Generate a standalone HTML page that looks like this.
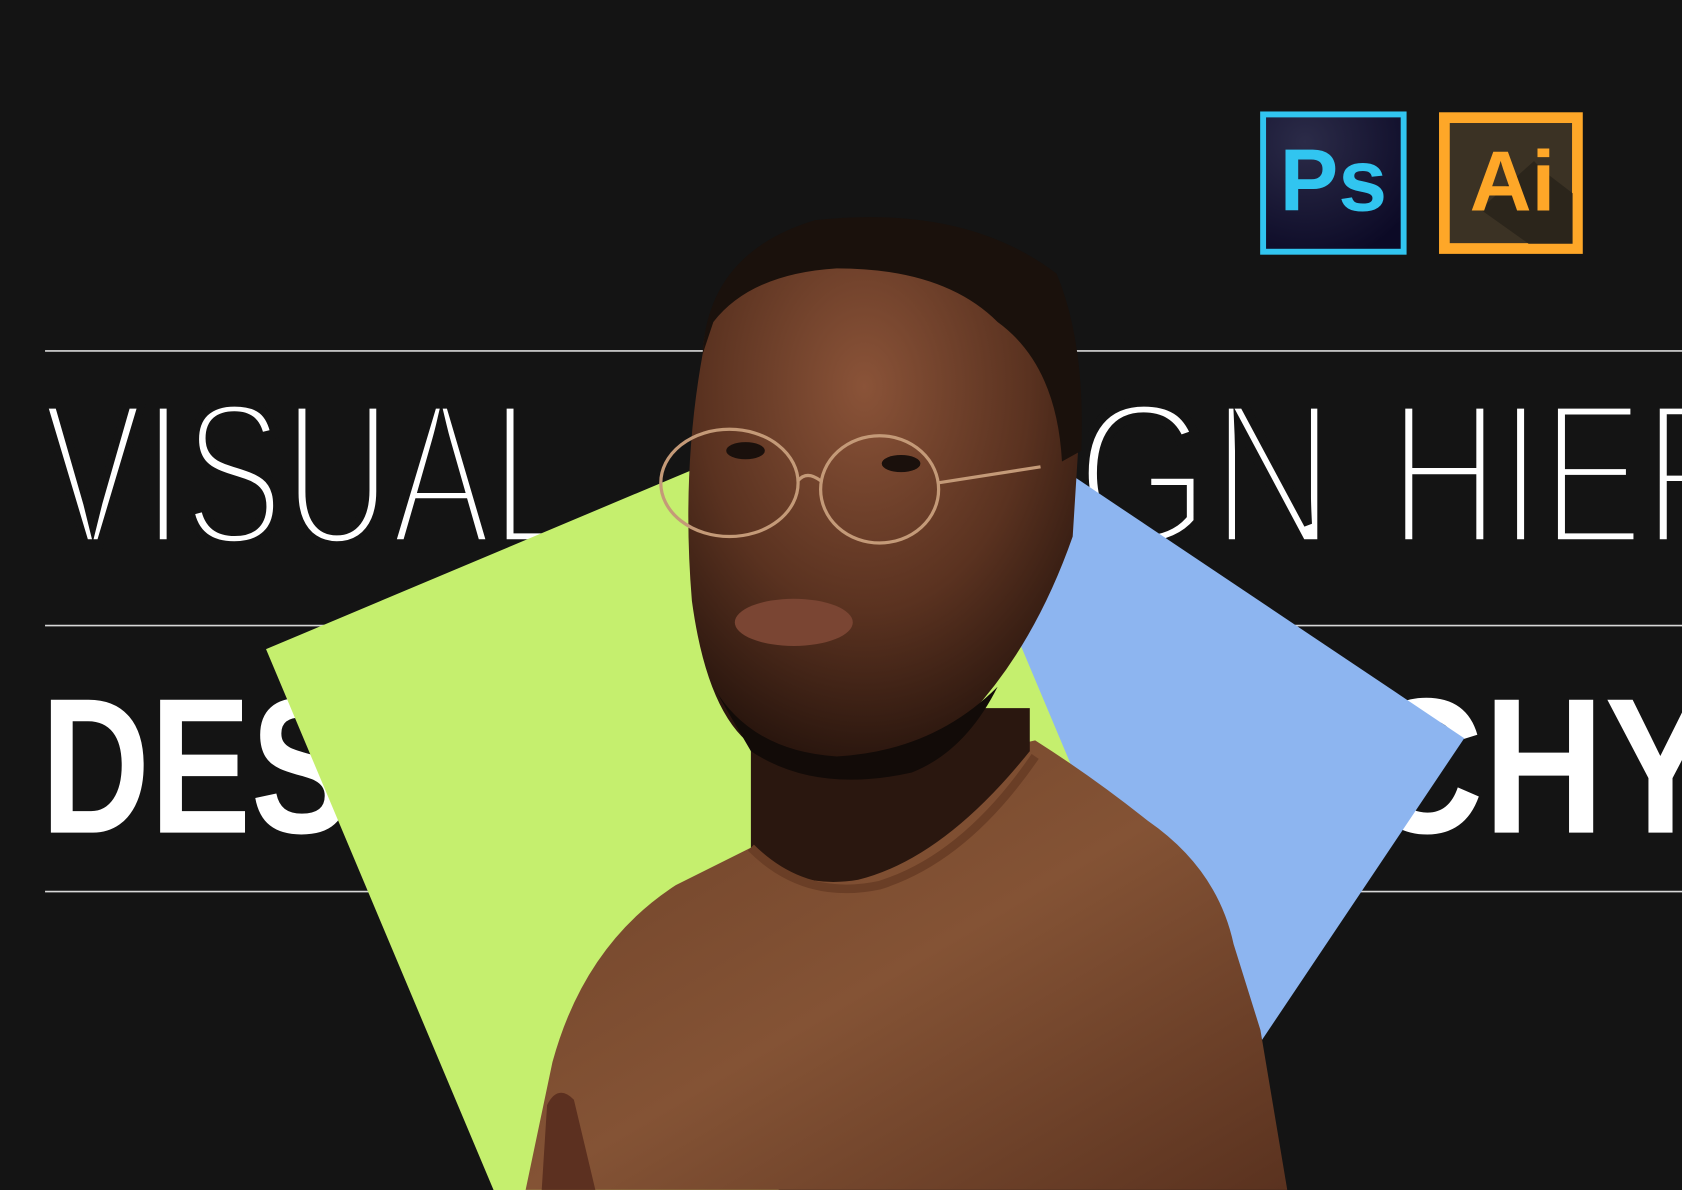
<!DOCTYPE html>
<html><head><meta charset="utf-8"><style>
html,body{margin:0;padding:0;background:#141414;overflow:hidden;width:1682px;height:1190px}
svg{display:block}
</style></head><body>
<svg width="1682" height="1190" viewBox="0 0 1568 1109" xmlns="http://www.w3.org/2000/svg">
<defs>
<radialGradient id="psg" cx="0.3" cy="0.2" r="0.9"><stop offset="0" stop-color="#2b2b48"/><stop offset="1" stop-color="#0c0a26"/></radialGradient>
<radialGradient id="face" cx="0.45" cy="0.3" r="0.7"><stop offset="0" stop-color="#8a5338"/><stop offset="0.6" stop-color="#5a3220"/><stop offset="1" stop-color="#2a160e"/></radialGradient>
<linearGradient id="sw" x1="0" y1="0" x2="1" y2="1"><stop offset="0" stop-color="#6e4128"/><stop offset="0.5" stop-color="#845335"/><stop offset="1" stop-color="#5a321f"/></linearGradient>
</defs>
<rect width="1568" height="1109" fill="#141414"/>
<g stroke="#d8d8d8" stroke-width="1.5">
<line x1="42" y1="327" x2="1568" y2="327"/>
<line x1="42" y1="583" x2="1568" y2="583"/>
<line x1="42" y1="831" x2="1568" y2="831"/>
</g>
<g fill="#fff" stroke="#141414" stroke-width="9" paint-order="fill stroke" font-family="'Liberation Sans',sans-serif" font-size="190">
<text x="40" y="507" textLength="495" lengthAdjust="spacingAndGlyphs">VISUAL</text>
<text x="1003" y="507" textLength="242" lengthAdjust="spacingAndGlyphs">GN</text>
<text x="1295" y="507" textLength="340" lengthAdjust="spacingAndGlyphs">HIER</text>
</g>
<g fill="#fff" font-family="'Liberation Sans',sans-serif" font-weight="700" font-size="180">
<text x="38" y="776" textLength="290" lengthAdjust="spacingAndGlyphs">DES</text>
<text x="1270" y="776" textLength="330" lengthAdjust="spacingAndGlyphs">CHY</text>
</g>
<polygon points="995,440 1365,688 1117,1058 747,810" fill="#8db5f0"/>
<polygon points="248,605 847,353 1099,952 500,1204" fill="#c5ef6e"/>
<path d="M490,1109 L515,990 Q545,880 630,825 L720,780 Q800,760 900,705 L965,690 Q1020,725 1070,765 Q1135,810 1150,880 L1175,960 L1200,1109 Z" fill="url(#sw)"/>
<path d="M700,790 Q740,830 800,820 Q880,800 960,700 L960,660 L700,660 Z" fill="#2a170f"/>
<path d="M700,790 Q750,840 820,825 Q900,800 965,705" fill="none" stroke="#6a3e26" stroke-width="8"/>
<path d="M655,330 Q660,240 760,215 Q900,195 985,265 Q1012,330 1005,420 L1000,500 Q965,600 905,665 Q830,725 720,705 Q662,685 645,560 Q635,440 655,330Z" fill="url(#face)"/>
<path d="M655,330 Q660,235 760,205 Q900,190 985,255 Q1012,320 1008,420 L990,430 Q985,340 930,300 Q880,250 780,250 Q700,255 665,300 Z" fill="#1a110c"/>
<path d="M665,640 Q700,700 780,705 Q870,700 930,640 Q900,700 850,720 Q760,740 700,700 Z" fill="#120b08"/>
<ellipse cx="740" cy="580" rx="55" ry="22" fill="#7a4533"/>
<g fill="none" stroke="#c49a78" stroke-width="3">
<ellipse cx="680" cy="450" rx="64" ry="50"/>
<ellipse cx="820" cy="456" rx="55" ry="50"/>
<path d="M744,448 Q752,438 765,448"/>
<path d="M874,450 L970,435"/>
</g>
<ellipse cx="695" cy="420" rx="18" ry="8" fill="#1a100c"/>
<ellipse cx="840" cy="432" rx="18" ry="8" fill="#1a100c"/>
<path d="M505,1109 L510,1030 Q520,1010 535,1025 L555,1109Z" fill="#5c3020"/>
<rect x="1177.5" y="106.5" width="131" height="128" fill="url(#psg)" stroke="#31c5f0" stroke-width="5.5"/>
<text x="1243" y="196" text-anchor="middle" font-family="'Liberation Sans',sans-serif" font-weight="700" font-size="82" fill="#31c5f0">Ps</text>
<rect x="1346.5" y="109.5" width="124" height="122" fill="#3b3224" stroke="#fea728" stroke-width="10"/>
<polygon points="1380,195 1425,227 1466,227 1466,180 1440,160 1430,150" fill="#2b251b"/>
<text x="1410" y="196" text-anchor="middle" font-family="'Liberation Sans',sans-serif" font-weight="700" font-size="80" fill="#fea728">Ai</text>
</svg>
</body></html>
